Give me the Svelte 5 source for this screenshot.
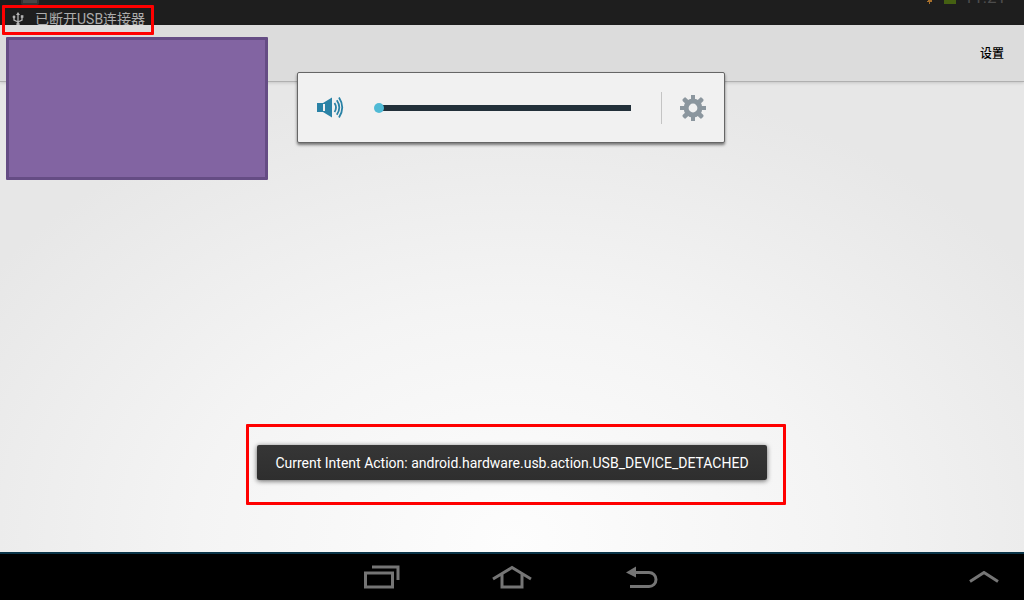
<script lang="ts">
	let volume = $state(0);

	const cardinal = [0, 90, 180, 270];
	const diagonal = [45, 135, 225, 315];
</script>

<div class="screen">
	<header class="status">
		<div class="ticker">
			<div class="row outgoing">
				<span class="thumb"></span>
				<svg class="debug" width="8" height="6" viewBox="0 0 8 6" aria-hidden="true">
					<path d="M1 1h3v1h1v2H3v2H2V4H0V3h1z" fill="#a8702c" />
					<path d="M6 0h2v2H6z" fill="#55432f" />
				</svg>
				<span class="battery"></span>
				<span class="clock">11:21</span>
			</div>
			<div class="row incoming">
				<svg width="12" height="14" viewBox="0 0 12 14" aria-hidden="true">
					<path
						d="M6 2v10M6 10L2 8V5M6 10l4-2V4"
						fill="none"
						stroke="#b4b4b4"
						stroke-width="1.3"
					/>
					<path d="M6 0l2 3H4z" fill="#b4b4b4" />
					<circle cx="6" cy="12" r="1.7" fill="#b4b4b4" />
					<circle cx="2" cy="5" r="1.4" fill="#b4b4b4" />
					<path d="M8.8 3.2h2.6v2.6H8.8z" fill="#b4b4b4" />
				</svg>
				<span>已断开USB连接器</span>
			</div>
		</div>
	</header>

	<div class="actions">
		<button class="settings">设置</button>
	</div>

	<main></main>

	<nav>
		<div class="keys">
			<button aria-label="Recent apps">
				<svg width="36" height="24" viewBox="0 0 36 24">
					<path d="M8 2h26v13M1.5 8h27v14h-27z" />
				</svg>
			</button>
			<button aria-label="Home">
				<svg width="40" height="24" viewBox="0 0 40 24">
					<path d="M1 14L20 2.5L39 14M10 9.5V22h20V9.5" />
				</svg>
			</button>
			<button aria-label="Back">
				<svg width="32" height="24" viewBox="0 0 32 24">
					<path d="M9 7.5h14a7 7 0 0 1 0 14H4" />
					<path class="solid" d="M0 7.5L10 1.5v11z" />
				</svg>
			</button>
		</div>
		<button class="expand" aria-label="Show tray">
			<svg width="30" height="12" viewBox="0 0 30 12">
				<path d="M1 10.5L15 1.5L29 10.5" />
			</svg>
		</button>
	</nav>

	<div class="redacted"></div>
	<div class="mark mark-status"></div>

	<div class="layer layer-volume">
		<div class="volume">
			<svg class="speaker" width="28" height="22" viewBox="0 0 28 22" aria-hidden="true">
				<path
					fill="#2a82a6"
					fill-rule="evenodd"
					d="M0 6h6L15 0.5v20L6 15H0zM6 7v7h2V7z"
				/>
				<path
					fill="none"
					stroke="#2a82a6"
					stroke-width="1.8"
					d="M17.5 6q3 4.500 0 9M19.800 3.200q5 7.300 0 14.600M22 0.500q6.500 10 0 20"
				/>
			</svg>
			<input type="range" min="0" max="15" bind:value={volume} aria-label="Volume" />
			<button class="gear" aria-label="Sound settings">
				<svg width="26" height="26" viewBox="-13 -13 26 26">
					<circle r="6.9" fill="none" stroke="#8b969e" stroke-width="5" />
					{#each cardinal as angle}
						<path d="M-2-13h4v5h-4z" fill="#8b969e" transform="rotate({angle})" />
					{/each}
					{#each diagonal as angle}
						<rect
							x="-2.3"
							y="-13.5"
							width="4.6"
							height="6"
							rx="1.5"
							fill="#8b969e"
							transform="rotate({angle})"
						/>
					{/each}
				</svg>
			</button>
		</div>
	</div>

	<div class="layer layer-toast">
		<div class="mark mark-toast">
			<div class="toast" role="status">
				Current Intent Action: android.hardware.usb.action.USB_DEVICE_DETACHED
			</div>
		</div>
	</div>
</div>

<style>
	:global(body) {
		margin: 0;
		font-family: Roboto, 'Noto Sans CJK SC', sans-serif;
	}

	.screen {
		position: relative;
		display: flex;
		flex-direction: column;
		min-height: 100vh;
		overflow: hidden;
		background: radial-gradient(ellipse 62% 78% at 50% 90%, #fdfdfd 0%, #f4f4f4 50%, #e7e7e7 100%);
	}

	button {
		display: flex;
		align-items: center;
		justify-content: center;
		padding: 0;
		border: none;
		background: none;
		font-family: inherit;
		cursor: pointer;
	}

	.status {
		height: 25px;
		overflow: hidden;
		background: #1e1e1e;
	}

	/* caught halfway through the ticker roll */
	.ticker {
		transform: translateY(-19px);
	}

	.row {
		display: flex;
		height: 25px;
		box-sizing: border-box;
	}

	.outgoing {
		align-items: flex-end;
		padding: 0 18px 0 21px;
	}

	.thumb {
		width: 14px;
		height: 14px;
		margin: 0 auto 1px 0;
		border: 2px solid #333;
		border-radius: 2px;
		background: #484848;
	}

	.debug {
		margin: 0 9px 2px 0;
	}

	.battery {
		width: 12px;
		height: 14px;
		margin: 0 8px 2px 0;
		background: #456012;
	}

	.clock {
		color: #4c4c4c;
		font-size: 17px;
		line-height: 18px;
	}

	.incoming {
		align-items: center;
		gap: 11px;
		padding-left: 12px;
		color: #acacac;
		font-size: 14px;
		line-height: 24px;
	}

	.actions {
		display: flex;
		justify-content: flex-end;
		height: 57px;
		box-sizing: border-box;
		border-bottom: 1px solid #b0b0b0;
		background: #dcdcdc;
		box-shadow: 0 1px 3px rgba(0, 0, 0, 0.15);
	}

	.settings {
		padding: 0 20px 2px;
		color: #000;
		font-size: 12px;
		font-weight: 500;
	}

	main {
		flex: 1;
	}

	nav {
		display: grid;
		grid-template-columns: 1fr auto 1fr;
		height: 48px;
		box-sizing: border-box;
		border-top: 2px solid #0a3448;
		background: #000;
	}

	.keys {
		display: flex;
		grid-column: 2;
	}

	.keys button {
		width: 130px;
	}

	.expand {
		justify-self: end;
		padding-right: 25px;
	}

	nav path {
		fill: none;
		stroke: #757575;
		stroke-width: 3;
	}

	nav .solid {
		fill: #757575;
		stroke: none;
	}

	.redacted {
		position: absolute;
		top: 37px;
		left: 6px;
		width: 262px;
		height: 143px;
		box-sizing: border-box;
		border: 3px solid #654c84;
		border-radius: 1px;
		background: #8264a2;
	}

	.mark {
		box-sizing: border-box;
		border: 3px solid #f00;
		border-radius: 1px;
	}

	.mark-status {
		position: absolute;
		top: 5px;
		left: 2px;
		width: 152px;
		height: 30px;
	}

	.layer {
		position: absolute;
		right: 0;
		left: 0;
		display: flex;
		justify-content: center;
	}

	.layer-volume {
		top: 72px;
		padding-right: 2px;
	}

	.layer-toast {
		bottom: 95px;
		padding-left: 8px;
	}

	.volume {
		display: flex;
		align-items: center;
		height: 71px;
		box-sizing: border-box;
		padding: 0 18px 0 19px;
		border: 1px solid #666;
		border-radius: 2px;
		background: #f1f1f1;
		box-shadow: 0 2px 3px rgba(0, 0, 0, 0.5);
	}

	input[type='range'] {
		width: 257px;
		height: 10px;
		margin: 0 30px 0 29px;
		appearance: none;
		background: transparent;
		cursor: pointer;
	}

	input[type='range']::-webkit-slider-runnable-track {
		height: 6px;
		background: linear-gradient(to right, transparent 5px, #22303a 5px);
	}

	input[type='range']::-webkit-slider-thumb {
		width: 10px;
		height: 10px;
		margin-top: -2px;
		appearance: none;
		border-radius: 50%;
		background: #50bad5;
	}

	.gear {
		height: 32px;
		padding-left: 18px;
		border-left: 1px solid #c4c4c4;
	}

	.mark-toast {
		padding: 18px 16px 22px 8px;
	}

	.toast {
		padding: 10px 18px 8px;
		border-radius: 2px;
		background: linear-gradient(#363636, #2e2e2e);
		box-shadow: 0 1px 5px rgba(0, 0, 0, 0.6);
		color: #fff;
		font-size: 14px;
		line-height: 17px;
	}
</style>
